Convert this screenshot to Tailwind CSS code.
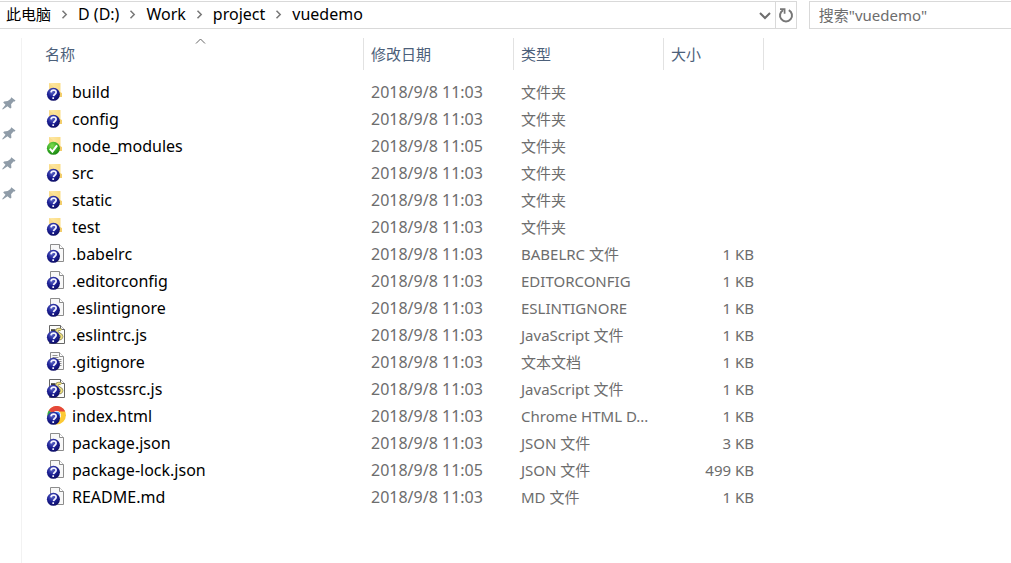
<!DOCTYPE html>
<html lang="zh-CN">
<head>
<meta charset="utf-8">
<title>vuedemo</title>
<meta name="viewport" content="width=device-width, initial-scale=1">
<script src="https://cdn.jsdelivr.net/npm/@tailwindcss/browser@4"></script>
</head>
<body class="flex min-h-screen flex-col overflow-x-hidden bg-white font-['Noto_Sans','Noto_Sans_CJK_SC',sans-serif] text-[15px] leading-5 text-black">

<svg class="absolute size-0" aria-hidden="true">
  <defs>
    <linearGradient id="gFolder" x1="0" x2="1"><stop offset="0" stop-color="#ffe9a8"/><stop offset="1" stop-color="#fadb80"/></linearGradient>
    <radialGradient id="gBlue" cx=".4" cy=".3" r=".75"><stop offset="0" stop-color="#5d68c8"/><stop offset=".5" stop-color="#1d2196"/><stop offset="1" stop-color="#0a0a5e"/></radialGradient>
    <radialGradient id="gGreen" cx=".4" cy=".3" r=".75"><stop offset="0" stop-color="#7fdc4e"/><stop offset=".6" stop-color="#32a822"/><stop offset="1" stop-color="#188010"/></radialGradient>
  </defs>
  <symbol id="unknown" viewBox="0 -1 20 21">
    <circle cx="7.4" cy="11.3" r="6.5" fill="url(#gBlue)"/>
    <path d="M5 9.3c.3-3 5.4-3 5.1.1-.1 1.8-2.3 1.8-2.6 3.8M7.2 14.3v1.8" fill="none" stroke="#f4f4ff" stroke-width="1.7"/>
  </symbol>
  <symbol id="ok" viewBox="0 -1 20 21">
    <circle cx="7.4" cy="11.3" r="6.5" fill="url(#gGreen)"/>
    <path d="M3.8 11.6l2.6 3 4.7-6.3" fill="none" stroke="#fff" stroke-width="2"/>
  </symbol>
  <symbol id="folder" viewBox="0 -1 20 21">
    <path d="M3 0h11.5v9.2l1.5 1V14H3z" fill="url(#gFolder)"/>
    <path d="M3 0l4 3v11H3z" fill="#f9dc8c"/>
    <path d="M13 14V10l1.5-.8L16 10.2V14z" fill="#f2cd6c"/>
  </symbol>
  <symbol id="file" viewBox="0 -1 20 21">
    <path d="M4.5-.5h9l4 4v13h-13z" fill="#f8f8f8" stroke="#8c8c8c"/>
    <path d="M13.5-.5v4h4" fill="#fff" stroke="#8c8c8c"/>
  </symbol>
  <symbol id="textfile" viewBox="0 -1 20 21">
    <path d="M4.5-.5h9l4 4v13h-13z" fill="#f8f8f8" stroke="#8c8c8c"/>
    <path d="M13.5-.5v4h4" fill="#fff" stroke="#8c8c8c"/>
    <path d="M6.5 2.5h5M6.5 4.5h6M6.5 6.5h9M6.5 8.5h9M6.5 10.5h9M6.5 12.5h9" stroke="#929292"/>
  </symbol>
  <symbol id="script" viewBox="0 -1 20 21">
    <path d="M3.5-.5h11l4 4v14h-15z" fill="#fdfdfa" stroke="#666"/>
    <path d="M14.5-.5v4h4" fill="#fff" stroke="#666"/>
    <path d="M5 4.2h4.5" stroke="#3c3c34" stroke-width="2"/>
    <path d="M15.2 4.2c-2-1.8-4.8-.8-4.3 1.4.5 2 4.7 2.4 5 4.8.2 2-2.4 3-4.6 2" fill="none" stroke="#85805a" stroke-width="3"/>
    <path d="M15.2 4.2c-2-1.8-4.8-.8-4.3 1.4.5 2 4.7 2.4 5 4.8.2 2-2.4 3-4.6 2" fill="none" stroke="#f2e27e" stroke-width="1.7"/>
  </symbol>
  <symbol id="chrome" viewBox="0 -1 20 21">
    <circle cx="10.7" cy="8.2" r="9.2" fill="#fcc934"/>
    <path d="M10.7 8.2L2.7 3.6a9.2 9.2 0 0 0 3.4 12.6l4.6-8z" fill="#2da94f"/>
    <path d="M10.7 8.2L2.7 3.6a9.2 9.2 0 0 1 16 0l.4.8h-8.4z" fill="#e5483b"/>
    <circle cx="10.7" cy="8.2" r="4.3" fill="#fff"/>
    <circle cx="10.7" cy="8.2" r="3.4" fill="#4285f4"/>
  </symbol>
  <symbol id="pin" viewBox="0 0 14 14">
    <path d="M9.2.2l4.3 3.2-.8 1.2-1.2-.2-2.4 2.8.3 3.6-1.2.8-2.7-2.3L.8 12.4l-.6-.5 3.3-4.2L1.2 5.5l.9-1.1 3.6-.3L8.5 2z" fill="#8f9ca8"/>
  </symbol>
  <symbol id="chev" viewBox="0 0 6 9"><path d="M1 .8l3.7 3.7L1 8.2" fill="none" stroke="#777" stroke-width="1.5"/></symbol>
</svg>

<header class="mt-px flex h-7 gap-3">
  <div class="flex min-w-0 flex-1 border-y border-r border-[#d9d9d9]">
    <nav aria-label="地址" class="flex flex-1 items-center gap-[10px] pb-[2px] pl-[6px] text-base leading-5">
      <a href="#" class="text-[15px]">此电脑</a>
      <svg class="h-[9px] w-[7px]"><use href="#chev"/></svg>
      <a href="#">D (D:)</a>
      <svg class="h-[9px] w-[7px]"><use href="#chev"/></svg>
      <a href="#">Work</a>
      <svg class="h-[9px] w-[7px]"><use href="#chev"/></svg>
      <a href="#">project</a>
      <svg class="h-[9px] w-[7px]"><use href="#chev"/></svg>
      <a href="#">vuedemo</a>
    </nav>
    <button type="button" aria-label="以前的位置" class="flex w-5 items-center justify-center">
      <svg class="h-[9px] w-3" viewBox="0 0 12 9"><path d="M1 2l5 5 5-5" fill="none" stroke="#6e6e6e" stroke-width="2"/></svg>
    </button>
    <button type="button" aria-label="刷新" class="flex w-[21px] items-center justify-center border-l border-[#d9d9d9]">
      <svg class="size-4" viewBox="0 0 16 16"><path d="M10.8 3.1a6 6 0 1 1-5.6 0" fill="none" stroke="#777" stroke-width="2"/><path d="M2 2.2h4.6v4.6" fill="none" stroke="#777" stroke-width="1.7"/></svg>
    </button>
  </div>
  <input type="text" aria-label="搜索" placeholder="搜索&quot;vuedemo&quot;" class="w-1/5 border-y border-l border-[#d9d9d9] pl-[9px] text-[#6d6d6d] outline-none placeholder:text-[#6d6d6d]">
</header>

<div class="mt-[9px] flex flex-1">
  <aside class="flex w-[22px] shrink-0 flex-col gap-4 border-r border-[#f2f2f2] pt-[59px] pl-[2px]">
    <svg class="size-[14px]"><use href="#pin"/></svg>
    <svg class="size-[14px]"><use href="#pin"/></svg>
    <svg class="size-[14px]"><use href="#pin"/></svg>
    <svg class="size-[14px]"><use href="#pin"/></svg>
  </aside>
  <main class="min-w-0 flex-1">
    <table class="w-full table-fixed text-left whitespace-nowrap">
      <colgroup><col class="w-[342px]"><col class="w-[150px]"><col class="w-[150px]"><col class="w-[100px]"><col></colgroup>
      <thead class="text-[#4c607a]">
        <tr>
          <th class="p-0 pb-[9px] font-normal" aria-sort="ascending"><button type="button" class="relative h-8 w-full border-r border-[#e2e2e2] pl-[23px] text-left">名称<svg class="absolute top-0 left-1/2 h-[6px] w-[15px]" viewBox="0 0 15 6"><path d="M3 5.5l4.5-4.5L12 5.5" fill="none" stroke="#666"/></svg></button></th>
          <th class="p-0 pb-[9px] font-normal"><button type="button" class="h-8 w-full border-r border-[#e2e2e2] pl-[7px] text-left">修改日期</button></th>
          <th class="p-0 pb-[9px] font-normal"><button type="button" class="h-8 w-full border-r border-[#e2e2e2] pl-[7px] text-left">类型</button></th>
          <th class="p-0 pb-[9px] font-normal"><button type="button" class="h-8 w-full border-r border-[#e2e2e2] pl-[7px] text-left">大小</button></th>
          <td></td>
        </tr>
      </thead>
      <tbody id="files" class="text-[#6d6d6d]"></tbody>
    </table>
  </main>
</div>

<script>
const files = [
  ['folder', 'build', '11:03', '文件夹', ''],
  ['folder', 'config', '11:03', '文件夹', ''],
  ['folder', 'node_modules', '11:05', '文件夹', '', 'ok'],
  ['folder', 'src', '11:03', '文件夹', ''],
  ['folder', 'static', '11:03', '文件夹', ''],
  ['folder', 'test', '11:03', '文件夹', ''],
  ['file', '.babelrc', '11:03', 'BABELRC 文件', '1 KB'],
  ['file', '.editorconfig', '11:03', 'EDITORCONFIG', '1 KB'],
  ['file', '.eslintignore', '11:03', 'ESLINTIGNORE', '1 KB'],
  ['script', '.eslintrc.js', '11:03', 'JavaScript 文件', '1 KB'],
  ['textfile', '.gitignore', '11:03', '文本文档', '1 KB'],
  ['script', '.postcssrc.js', '11:03', 'JavaScript 文件', '1 KB'],
  ['chrome', 'index.html', '11:03', 'Chrome HTML D...', '1 KB'],
  ['file', 'package.json', '11:03', 'JSON 文件', '3 KB'],
  ['file', 'package-lock.json', '11:05', 'JSON 文件', '499 KB'],
  ['file', 'README.md', '11:03', 'MD 文件', '1 KB'],
];
document.getElementById('files').innerHTML = files.map(([icon, name, time, type, size, badge = 'unknown']) => `
  <tr class="h-[27px]">
    <td class="p-0 pl-6"><a href="#" class="flex items-center gap-[6px] text-base leading-5 text-black"><svg class="h-[21px] w-5 shrink-0"><use href="#${icon}"/><use href="#${badge}"/></svg><span class="pb-[2px]">${name}</span></a></td>
    <td class="p-0 pb-[2px] pl-[7px] text-base leading-5">2018/9/8 ${time}</td>
    <td class="p-0 pb-[2px] pl-[7px]">${type}</td>
    <td class="p-0 pr-[10px] pb-[2px] text-right">${size}</td>
    <td></td>
  </tr>`).join('');
</script>
</body>
</html>
